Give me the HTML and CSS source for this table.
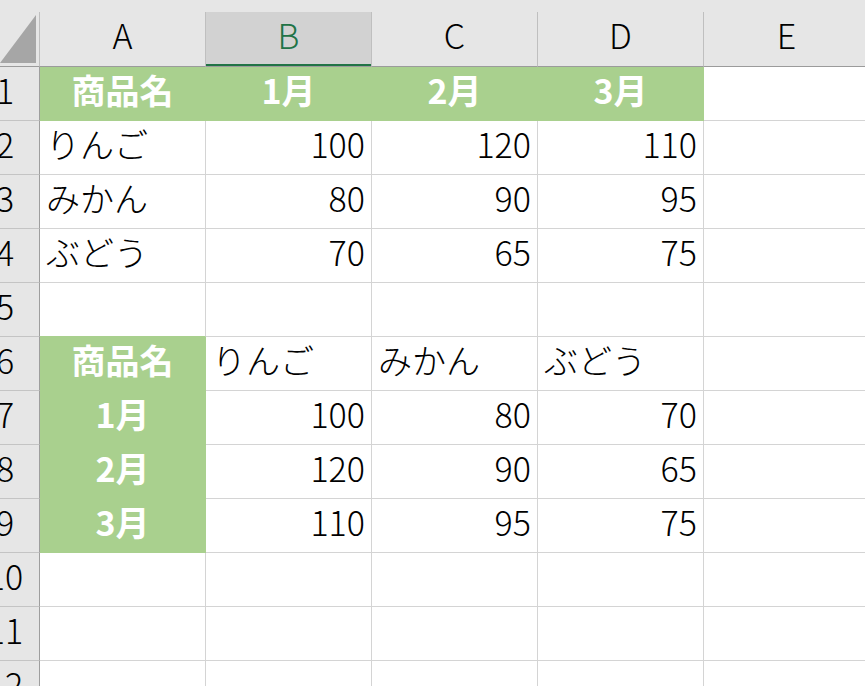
FILE: index.html
```html
<!DOCTYPE html>
<html lang="ja">
<head>
    <meta charset="UTF-8">
    <meta name="viewport" content="width=device-width, initial-scale=1.0">
    <title>Sheet1</title>
    <link rel="stylesheet" href="styles.css">
</head>
<body>
    <div class="top-strip"></div>

    <!-- 列見出し -->
    <div class="row head">
        <div class="cell corner"><div class="tri"></div></div>
        <div class="cell">A</div>
        <div class="cell sel">B</div>
        <div class="cell">C</div>
        <div class="cell">D</div>
        <div class="cell">E</div>
    </div>

    <!-- 表1 -->
    <div class="row">
        <div class="cell rh"><span>1</span></div>
        <div class="cell hd">商品名</div>
        <div class="cell hd">1月</div>
        <div class="cell hd">2月</div>
        <div class="cell hd">3月</div>
        <div class="cell"></div>
    </div>
    <div class="row">
        <div class="cell rh"><span>2</span></div>
        <div class="cell">りんご</div>
        <div class="cell num">100</div>
        <div class="cell num">120</div>
        <div class="cell num">110</div>
        <div class="cell"></div>
    </div>
    <div class="row">
        <div class="cell rh"><span>3</span></div>
        <div class="cell">みかん</div>
        <div class="cell num">80</div>
        <div class="cell num">90</div>
        <div class="cell num">95</div>
        <div class="cell"></div>
    </div>
    <div class="row">
        <div class="cell rh"><span>4</span></div>
        <div class="cell">ぶどう</div>
        <div class="cell num">70</div>
        <div class="cell num">65</div>
        <div class="cell num">75</div>
        <div class="cell"></div>
    </div>
    <div class="row">
        <div class="cell rh"><span>5</span></div>
        <div class="cell above-green"></div>
        <div class="cell"></div>
        <div class="cell"></div>
        <div class="cell"></div>
        <div class="cell"></div>
    </div>

    <!-- 表2（行列入れ替え） -->
    <div class="row">
        <div class="cell rh"><span>6</span></div>
        <div class="cell hd">商品名</div>
        <div class="cell">りんご</div>
        <div class="cell">みかん</div>
        <div class="cell">ぶどう</div>
        <div class="cell"></div>
    </div>
    <div class="row">
        <div class="cell rh"><span>7</span></div>
        <div class="cell hd">1月</div>
        <div class="cell num">100</div>
        <div class="cell num">80</div>
        <div class="cell num">70</div>
        <div class="cell"></div>
    </div>
    <div class="row">
        <div class="cell rh"><span>8</span></div>
        <div class="cell hd">2月</div>
        <div class="cell num">120</div>
        <div class="cell num">90</div>
        <div class="cell num">65</div>
        <div class="cell"></div>
    </div>
    <div class="row">
        <div class="cell rh"><span>9</span></div>
        <div class="cell hd">3月</div>
        <div class="cell num">110</div>
        <div class="cell num">95</div>
        <div class="cell num">75</div>
        <div class="cell"></div>
    </div>
    <div class="row">
        <div class="cell rh"><span>10</span></div>
        <div class="cell"></div>
        <div class="cell"></div>
        <div class="cell"></div>
        <div class="cell"></div>
        <div class="cell"></div>
    </div>
    <div class="row">
        <div class="cell rh"><span>11</span></div>
        <div class="cell"></div>
        <div class="cell"></div>
        <div class="cell"></div>
        <div class="cell"></div>
        <div class="cell"></div>
    </div>
    <div class="row">
        <div class="cell rh"><span>12</span></div>
        <div class="cell"></div>
        <div class="cell"></div>
        <div class="cell"></div>
        <div class="cell"></div>
        <div class="cell"></div>
    </div>
</body>
</html>
```

FILE: styles.css
```css
body {
    margin: 0;
    width: 865px;
    height: 686px;
    overflow: hidden;
    background: #ffffff;
    font-family: "Noto Sans CJK JP", "Noto Sans", sans-serif;
    font-size: 34px;
    font-weight: 300;
    color: #000000;
}

.top-strip {
    height: 12px;
    background: #e6e6e6;
}

.row {
    display: grid;
    grid-template-columns: 40px repeat(5, 166px);
    height: 54px;
}

.cell {
    box-sizing: border-box;
    border-right: 1px solid #d4d4d4;
    border-bottom: 1px solid #d4d4d4;
    line-height: 46px;
    padding: 0 6px;
    white-space: nowrap;
}

.num {
    text-align: right;
    padding-right: 6px;
}

/* 列見出し */
.head {
    height: 55px;
}

.head .cell {
    background: #e6e6e6;
    border-right-color: #bfbfbf;
    border-bottom-color: #9b9b9b;
    text-align: center;
}

.head .sel {
    background: #d2d2d2;
    color: #217346;
    box-shadow: inset 0 -2px 0 #217346;
}

.corner {
    padding: 0;
}

.tri {
    width: 36px;
    height: 48px;
    margin-top: 3px;
    background: #a6a6a6;
    clip-path: polygon(100% 0, 100% 100%, 0 100%);
}

/* 行見出し */
.rh {
    background: #e6e6e6;
    border-right-color: #9e9e9e;
    border-bottom-color: #c4c4c4;
    padding: 0;
    overflow: hidden;
}

.rh span {
    display: block;
    width: 68px;
    margin-left: -29px;
    text-align: center;
}

/* 緑の見出しセル */
.hd {
    background: #a9d08e;
    border-right-color: #a9d08e;
    border-bottom-color: #a9d08e;
    color: #ffffff;
    font-weight: 700;
    text-align: center;
}

.above-green {
    border-bottom-color: #a9d08e;
}
```
